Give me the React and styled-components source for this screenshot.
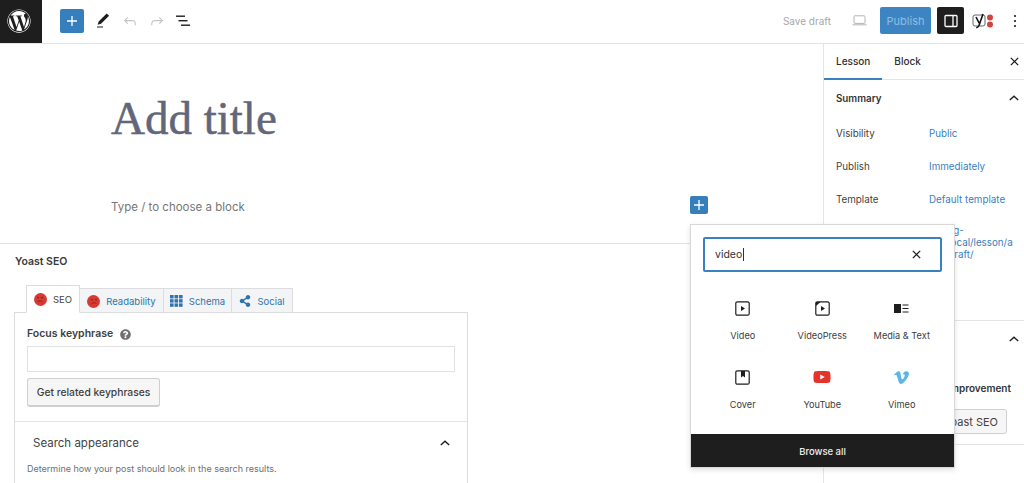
import React from "react";
import styled, { createGlobalStyle } from "styled-components";
import { FaWordpress, FaYoutube, FaVimeoV, FaShareAlt, FaQuestionCircle } from "react-icons/fa";

const GlobalStyle = createGlobalStyle`
  html, body {
    margin: 0;
    padding: 0;
    height: 100%;
    overflow: hidden;
    background: #fff;
    font-family: Inter, "Liberation Sans", sans-serif;
    color: #1e1e1e;
  }
  * { box-sizing: border-box; }
`;

const blocks = [
  { name: "Video", icon: <VideoIcon /> },
  { name: "VideoPress", icon: <VideoPressIcon /> },
  { name: "Media & Text", icon: <MediaTextIcon /> },
  { name: "Cover", icon: <CoverIcon /> },
  { name: "YouTube", icon: <FaYoutube size={18} color="#e5322b" /> },
  { name: "Vimeo", icon: <FaVimeoV size={17} color="#5db7e4" /> },
];

function Plus({ size = 14 }) {
  return (
    <svg width={size} height={size} viewBox="0 0 14 14">
      <path d="M6.35 2h1.3v4.35H12v1.3H7.65V12h-1.3V7.65H2v-1.3h4.35z" fill="#fff" />
    </svg>
  );
}

function Close({ size = 12, color = "#1e1e1e" }) {
  return (
    <svg width={size} height={size} viewBox="0 0 12 12">
      <path d="M2 2l8 8M10 2l-8 8" stroke={color} strokeWidth="1.4" fill="none" />
    </svg>
  );
}

function ChevronUp() {
  return (
    <svg width="12" height="8" viewBox="0 0 12 8">
      <path d="M1.8 6L6 2.2 10.2 6" stroke="#1e1e1e" strokeWidth="1.4" fill="none" />
    </svg>
  );
}

function VideoIcon() {
  return (
    <svg width="15" height="15" viewBox="0 0 15 15">
      <rect x="0.8" y="0.8" width="13.4" height="13.4" rx="1.5" fill="none" stroke="#1e1e1e" strokeWidth="1.2" />
      <path d="M6 5l4 2.5L6 10z" fill="#1e1e1e" />
    </svg>
  );
}

function VideoPressIcon() {
  return (
    <svg width="15" height="15" viewBox="0 0 15 15">
      <rect x="0.8" y="0.8" width="13.4" height="13.4" rx="1.5" fill="none" stroke="#1e1e1e" strokeWidth="1.2" />
      <path d="M1 1h4.5L1 5z" fill="#1e1e1e" />
      <path d="M6 5l4 2.5L6 10z" fill="#1e1e1e" />
    </svg>
  );
}

function MediaTextIcon() {
  return (
    <svg width="15" height="11" viewBox="0 0 15 11">
      <rect x="0" y="1" width="7" height="9" fill="#1e1e1e" />
      <path d="M8.5 2h6M8.5 5.5h6M8.5 9h6" stroke="#1e1e1e" strokeWidth="1.2" />
    </svg>
  );
}

function CoverIcon() {
  return (
    <svg width="15" height="15" viewBox="0 0 15 15">
      <rect x="0.8" y="0.8" width="13.4" height="13.4" rx="1.5" fill="none" stroke="#1e1e1e" strokeWidth="1.2" />
      <path d="M6 1h4v6.5L8 6 6 7.5z" fill="#1e1e1e" />
    </svg>
  );
}

function Frown() {
  return (
    <FaceWrap>
      <svg width="12" height="12" viewBox="0 0 12 12">
        <circle cx="4" cy="4.6" r="0.9" fill="#8e1f17" />
        <circle cx="8" cy="4.6" r="0.9" fill="#8e1f17" />
        <path d="M3.4 8.8c1.3-1.4 3.9-1.4 5.2 0" stroke="#8e1f17" strokeWidth="0.9" fill="none" />
      </svg>
    </FaceWrap>
  );
}

function GridIcon() {
  return (
    <svg width="13" height="12" viewBox="0 0 13 12" fill="#2f74ae">
      {[0, 4.5, 9].map((x) =>
        [0, 4.2, 8.4].map((y) => <rect key={`${x}-${y}`} x={x} y={y} width="3.6" height="3.4" />)
      )}
    </svg>
  );
}

function App() {
  return (
    <Page>
      <GlobalStyle />
      <TopBar>
        <LogoBox>
          <FaWordpress size={24} color="#fff" />
        </LogoBox>
        <ToolGroup>
          <InserterButton $size={24}>
            <Plus />
          </InserterButton>
          <ToolIcon>
            <svg width="18" height="18" viewBox="0 0 24 24" fill="#1e1e1e">
              <path d="M20.1 5.1L16.9 2 6.2 12.7l-1.3 4.4 4.5-1.3L20.1 5.1zM4 20.8h8v-1.5H4v1.5z" />
            </svg>
          </ToolIcon>
          <ToolIcon>
            <svg width="18" height="18" viewBox="0 0 24 24" fill="#c4c4c4">
              <path d="M18.3 11.7c-.6-.6-1.4-.9-2.3-.9H6.7l2.9-3.3-1.1-1-4.5 5L8.5 16l1-1-2.7-2.7H16c.5 0 .9.2 1.3.5 1 1 1 3.4 1 4.5v.3h1.5v-.2c0-1.5 0-4.3-1.5-5.7z" />
            </svg>
          </ToolIcon>
          <ToolIcon>
            <svg width="18" height="18" viewBox="0 0 24 24" fill="#c4c4c4">
              <path d="M15.6 6.5l-1.1 1 2.9 3.3H8c-.9 0-1.7.3-2.3.9-1.4 1.5-1.4 4.2-1.4 5.6v.2h1.5v-.3c0-1.1 0-3.5 1-4.5.3-.3.7-.5 1.3-.5h9.2L14.5 15l1.1 1.1 4.6-4.6-4.6-5z" />
            </svg>
          </ToolIcon>
          <ToolIcon>
            <svg width="15" height="12" viewBox="0 0 15 12" fill="#1e1e1e">
              <rect x="0" y="0.5" width="9" height="1.4" />
              <rect x="2.5" y="5" width="9" height="1.4" />
              <rect x="5" y="9.5" width="9" height="1.4" />
            </svg>
          </ToolIcon>
        </ToolGroup>
        <Actions>
          <SaveDraft>Save draft</SaveDraft>
          <PreviewIcon>
            <svg width="15" height="11" viewBox="0 0 15 11" fill="none" stroke="#b5b5b5" strokeWidth="1">
              <rect x="2" y="0.8" width="11" height="7.6" rx="0.8" />
              <path d="M0.5 9.8h14" />
            </svg>
          </PreviewIcon>
          <PublishButton>Publish</PublishButton>
          <SettingsButton>
            <svg width="14" height="14" viewBox="0 0 14 14" fill="none" stroke="#fff" strokeWidth="1.3">
              <rect x="1" y="1.5" width="12" height="11" rx="1" />
              <path d="M9 1.5v11" />
            </svg>
          </SettingsButton>
          <YoastIcon>
            <svg width="22" height="16" viewBox="0 0 22 16" fill="none">
              <rect x="1" y="2" width="12" height="11" rx="2" stroke="#555" strokeWidth="0.9" />
              <path d="M4 4l3.2 6.2M11 1L7 12.5c-.4 1-1.2 2-2.8 2.2" stroke="#111" strokeWidth="1.6" />
              <circle cx="18" cy="4.5" r="3" fill="#d0463c" />
              <circle cx="18" cy="11.5" r="3" fill="#d0463c" />
            </svg>
          </YoastIcon>
          <MoreDots>
            <svg width="4" height="14" viewBox="0 0 4 14" fill="#1e1e1e">
              <circle cx="2" cy="2" r="1.1" />
              <circle cx="2" cy="7" r="1.1" />
              <circle cx="2" cy="12" r="1.1" />
            </svg>
          </MoreDots>
        </Actions>
      </TopBar>

      <Workspace>
        <MainColumn>
          <Canvas>
            <PostTitle>Add title</PostTitle>
            <BlockPrompt>
              <PromptText>Type / to choose a block</PromptText>
              <PopoverAnchor>
                <InserterButton $size={18}>
                  <Plus size={14} />
                </InserterButton>
                <Popover>
                  <SearchBox>
                    <SearchText>video</SearchText>
                    <Close size={11} />
                  </SearchBox>
                  <BlockGrid>
                    {blocks.map((block) => (
                      <BlockItem key={block.name}>
                        <BlockIcon>{block.icon}</BlockIcon>
                        <BlockName>{block.name}</BlockName>
                      </BlockItem>
                    ))}
                  </BlockGrid>
                  <BrowseAll>Browse all</BrowseAll>
                </Popover>
              </PopoverAnchor>
            </BlockPrompt>
          </Canvas>

          <MetaArea>
            <MetaTitle>Yoast SEO</MetaTitle>
            <Tabs>
              <Tab $active $width={54}>
                <Frown />
                SEO
              </Tab>
              <Tab $width={84}>
                <Frown />
                Readability
              </Tab>
              <Tab $width={68}>
                <GridIcon />
                Schema
              </Tab>
              <Tab $width={61}>
                <FaShareAlt size={12} color="#2f74ae" />
                Social
              </Tab>
            </Tabs>
            <MetaBox>
              <KeyphraseSection>
                <FieldLabel>
                  Focus keyphrase
                  <FaQuestionCircle size={11} color="#707070" />
                </FieldLabel>
                <KeyphraseInput />
                <RelatedButton>Get related keyphrases</RelatedButton>
              </KeyphraseSection>
              <AppearanceHeader>
                <span>Search appearance</span>
                <ChevronUp />
              </AppearanceHeader>
              <Hint>Determine how your post should look in the search results.</Hint>
            </MetaBox>
          </MetaArea>
        </MainColumn>

        <Sidebar>
          <SidebarTabs>
            <SidebarTab $active>Lesson</SidebarTab>
            <SidebarTab>Block</SidebarTab>
            <SidebarClose>
              <Close size={11} />
            </SidebarClose>
          </SidebarTabs>
          <SummarySection>
            <SectionHead>
              <strong>Summary</strong>
              <ChevronUp />
            </SectionHead>
            <SummaryRow>
              <RowLabel>Visibility</RowLabel>
              <RowValue>Public</RowValue>
            </SummaryRow>
            <SummaryRow>
              <RowLabel>Publish</RowLabel>
              <RowValue>Immediately</RowValue>
            </SummaryRow>
            <SummaryRow>
              <RowLabel>Template</RowLabel>
              <RowValue>Default template</RowValue>
            </SummaryRow>
            <SummaryRow>
              <RowLabel>URL</RowLabel>
              <RowValue $multi>
                a-blog-
                <br />
                site.local/lesson/a
                <br />
                uto-draft/
              </RowValue>
            </SummaryRow>
          </SummarySection>
          <YoastSection>
            <ChevronRow>
              <ChevronUp />
            </ChevronRow>
            <ImprovementText>SEO: Needs improvement</ImprovementText>
            <ButtonRow>
              <YoastButton>Improve your Yoast SEO</YoastButton>
            </ButtonRow>
          </YoastSection>
        </Sidebar>
      </Workspace>
    </Page>
  );
}

const Page = styled.div`
  width: 1024px;
  height: 483px;
  overflow: hidden;
  display: flex;
  flex-direction: column;
`;

const TopBar = styled.header`
  height: 44px;
  flex: none;
  display: flex;
  align-items: flex-start;
  border-bottom: 1px solid #e4e4e4;
`;

const LogoBox = styled.div`
  width: 42px;
  height: 43px;
  padding: 0 4px 2px 0;
  background: #1e1e1e;
  display: flex;
  align-items: center;
  justify-content: center;
`;

const ToolGroup = styled.div`
  display: flex;
  align-items: center;
  height: 41px;
  padding-left: 18px;
`;

const InserterButton = styled.div`
  width: ${(props) => props.$size}px;
  height: ${(props) => props.$size}px;
  background: #357fbd;
  border-radius: 2px;
  display: flex;
  align-items: center;
  justify-content: center;
`;

const ToolIcon = styled.div`
  width: 27px;
  height: 24px;
  display: flex;
  align-items: center;
  justify-content: center;

  ${InserterButton} + & {
    margin-left: 5px;
  }
`;

const Actions = styled.div`
  margin-left: auto;
  display: flex;
  align-items: center;
  height: 41px;
`;

const SaveDraft = styled.span`
  font-size: 10px;
  color: #a8a8a8;
  margin-right: 21px;
`;

const PreviewIcon = styled.div`
  display: flex;
  margin-right: 13px;
`;

const PublishButton = styled.div`
  width: 51px;
  height: 27px;
  background: #3d84c2;
  color: #8fbde3;
  border-radius: 2px;
  font-size: 11px;
  display: flex;
  align-items: center;
  justify-content: center;
`;

const SettingsButton = styled.div`
  width: 27px;
  height: 27px;
  margin-left: 6px;
  background: #1e1e1e;
  border-radius: 2px;
  display: flex;
  align-items: center;
  justify-content: center;
`;

const YoastIcon = styled.div`
  display: flex;
  margin-left: 8px;
`;

const MoreDots = styled.div`
  display: flex;
  margin-left: 19px;
  margin-right: 7px;
`;

const Workspace = styled.div`
  flex: 1;
  display: flex;
  min-height: 0;
`;

const MainColumn = styled.main`
  width: 823px;
  flex: none;
`;

const Canvas = styled.section`
  height: 200px;
  padding: 49px 115px 0 111px;
  border-bottom: 1px solid #e2e2e2;
`;

const PostTitle = styled.h1`
  margin: 0;
  font-family: "Liberation Serif", "DejaVu Serif", serif;
  font-weight: 400;
  font-size: 47px;
  line-height: 50px;
  -webkit-text-stroke: 0.5px #62667a;
  color: #62667a;
`;

const BlockPrompt = styled.div`
  margin-top: 53px;
  display: flex;
  align-items: center;
  justify-content: space-between;
  font-size: 11.5px;
  color: #767676;
`;

const PromptText = styled.span`
  margin-top: 4px;
`;

const PopoverAnchor = styled.div`
  position: relative;
  z-index: 5;
`;

const Popover = styled.div`
  position: absolute;
  top: 28px;
  left: 0;
  width: 265px;
  height: 244px;
  display: flex;
  flex-direction: column;
  background: #fff;
  border: 1px solid #d8d8d8;
  box-shadow: 0 2px 5px rgba(0, 0, 0, 0.12);
`;

const SearchBox = styled.div`
  margin: 12px 12px 0;
  height: 35px;
  flex: none;
  padding: 0 18px 0 10px;
  border: 2px solid #3a82bf;
  border-radius: 2px;
  display: flex;
  align-items: center;
  justify-content: space-between;
`;

const SearchText = styled.span`
  font-size: 10.5px;
  color: #333;
  padding-right: 1px;
  border-right: 1px solid #333;
`;

const BlockGrid = styled.div`
  flex: 1;
  min-height: 0;
  padding: 26px 0 0 12px;
  display: grid;
  grid-template-columns: repeat(3, 79.5px);
  grid-auto-rows: 69px;
  align-content: start;
`;

const BlockItem = styled.div`
  display: flex;
  flex-direction: column;
  align-items: center;
`;

const BlockIcon = styled.div`
  height: 20px;
  display: flex;
  align-items: center;
  justify-content: center;
`;

const BlockName = styled.span`
  margin-top: 11px;
  font-size: 9.2px;
  line-height: 14px;
  color: #3c3c3c;
  white-space: nowrap;
`;

const BrowseAll = styled.div`
  height: 33px;
  flex: none;
  padding-top: 1px;
  background: #1e1e1e;
  color: #eee;
  font-size: 9.5px;
  font-weight: 500;
  display: flex;
  align-items: center;
  justify-content: center;
`;

const MetaArea = styled.section`
  padding: 11px 0 0 14px;
`;

const MetaTitle = styled.div`
  font-size: 10.5px;
  font-weight: 600;
  line-height: 14px;
  color: #3a3a3a;
  padding-left: 1px;
`;

const Tabs = styled.div`
  margin: 17px 0 -1px 12px;
  height: 27px;
  display: flex;
  align-items: flex-end;
  position: relative;
  z-index: 1;
`;

const Tab = styled.div`
  width: ${(props) => props.$width}px;
  height: ${(props) => (props.$active ? 28 : 25)}px;
  display: flex;
  align-items: center;
  justify-content: center;
  gap: 6px;
  padding-top: ${(props) => (props.$active ? 0 : 1)}px;
  font-size: 9.5px;
  color: ${(props) => (props.$active ? "#444" : "#2f74ae")};
  background: ${(props) => (props.$active ? "#fff" : "#f3f4f5")};
  border: 1px solid #dcdcde;
  border-left-width: ${(props) => (props.$active ? 1 : 0)}px;
  border-bottom-color: ${(props) => (props.$active ? "#fff" : "#dcdcde")};
`;

const FaceWrap = styled.span`
  width: 13px;
  height: 13px;
  border-radius: 50%;
  background: #d63a32;
  display: flex;
  align-items: center;
  justify-content: center;
`;

const MetaBox = styled.div`
  width: 454px;
  border: 1px solid #dcdcde;
  border-bottom: none;
  height: 180px;
`;

const KeyphraseSection = styled.div`
  padding: 14px 12px;
  border-bottom: 1px solid #e4e4e4;
`;

const FieldLabel = styled.div`
  display: flex;
  align-items: center;
  gap: 7px;
  font-size: 10.5px;
  font-weight: 600;
  line-height: 14px;
  color: #3f3f3f;
`;

const KeyphraseInput = styled.div`
  margin-top: 5px;
  width: 428px;
  height: 26px;
  border: 1px solid #e2e2e2;
`;

const RelatedButton = styled.div`
  margin-top: 6px;
  width: 133px;
  height: 29px;
  border: 1px solid #cfcfcf;
  border-bottom-width: 2px;
  border-radius: 3px;
  background: #f6f6f6;
  font-size: 10.3px;
  font-weight: 500;
  color: #3f3f3f;
  display: flex;
  align-items: center;
  justify-content: center;
`;

const AppearanceHeader = styled.div`
  padding: 13px 16px 0 18px;
  display: flex;
  align-items: center;
  justify-content: space-between;
  font-size: 11.5px;
  line-height: 16px;
  color: #444;
`;

const Hint = styled.div`
  margin-top: 11px;
  padding-left: 12px;
  font-size: 9px;
  line-height: 14px;
  color: #707070;
`;

const Sidebar = styled.aside`
  flex: 1;
  border-left: 1px solid #e4e4e4;
`;

const SidebarTabs = styled.div`
  height: 36px;
  display: flex;
  align-items: stretch;
  border-bottom: 1px solid #e4e4e4;
`;

const SidebarTab = styled.div`
  padding: 0 12px;
  display: flex;
  align-items: center;
  font-size: 10px;
  font-weight: 500;
  color: #2f2f2f;
  margin-bottom: -1px;
  border-bottom: 2px solid ${(props) => (props.$active ? "#3a82bf" : "transparent")};
`;

const SidebarClose = styled.div`
  margin-left: auto;
  padding-right: 4px;
  display: flex;
  align-items: center;
`;

const SummarySection = styled.div`
  height: 241px;
  padding: 0 4px 0 12px;
  border-bottom: 1px solid #e4e4e4;
`;

const SectionHead = styled.div`
  height: 36px;
  display: flex;
  align-items: center;
  justify-content: space-between;
  font-size: 9.8px;

  strong {
    font-weight: 600;
    color: #333;
  }
`;

const SummaryRow = styled.div`
  display: grid;
  grid-template-columns: 93px 1fr;
  margin-top: 10px;
  min-height: 23px;
  align-items: start;
  font-size: 9.8px;
  line-height: 15px;
`;

const RowLabel = styled.span`
  color: #3f3f3f;
`;

const RowValue = styled.span`
  color: #3a80bc;
  white-space: nowrap;
  line-height: ${(props) => (props.$multi ? "12px" : "15px")};
`;

const YoastSection = styled.div`
  height: 124px;
  padding: 0 4px 0 12px;
  border-bottom: 1px solid #e4e4e4;
`;

const ChevronRow = styled.div`
  height: 36px;
  display: flex;
  align-items: center;
  justify-content: flex-end;
`;

const ImprovementText = styled.div`
  margin-top: 24px;
  font-size: 10px;
  font-weight: 600;
  line-height: 14px;
  text-align: right;
  padding-right: 9px;
  color: #333;
`;

const ButtonRow = styled.div`
  margin-top: 14px;
  display: flex;
  justify-content: flex-end;
  padding-right: 13px;
`;

const YoastButton = styled.div`
  height: 25px;
  padding: 0 8px;
  border: 1px solid #cfcfcf;
  border-radius: 3px;
  background: #f6f6f6;
  font-size: 11px;
  color: #444;
  display: flex;
  align-items: center;
  white-space: nowrap;
`;

export default App;
